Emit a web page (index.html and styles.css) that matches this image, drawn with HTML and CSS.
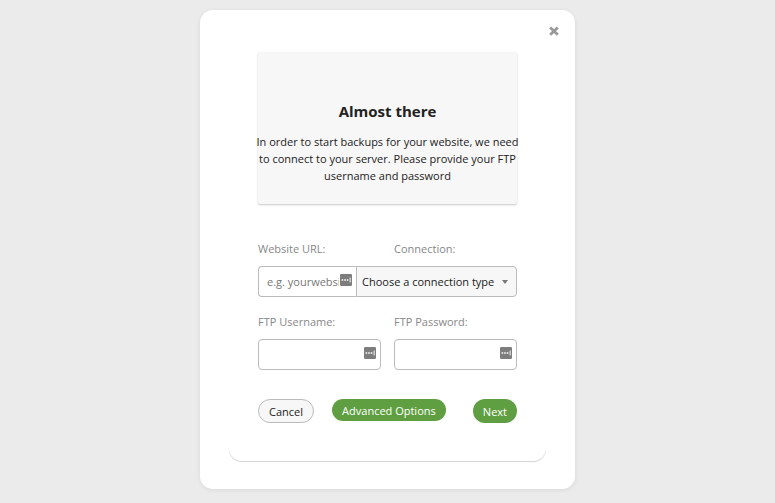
FILE: index.html
```html
<!DOCTYPE html>
<html lang="en">
<head>
    <meta charset="UTF-8">
    <meta name="viewport" content="width=device-width, initial-scale=1.0">
    <title>Almost there</title>
    <link rel="stylesheet" href="styles.css">
</head>
<body>
    <svg class="sprite" aria-hidden="true">
        <symbol id="key" viewBox="0 0 12 12">
            <rect width="12" height="12" rx="1.2" fill="#7d7d7d"/>
            <path d="M1.6 5.2h1.6v1.6H1.6zM4.2 5.2h1.6v1.6H4.2zM6.8 5.2h1.6v1.6H6.8zM9.7 3.6h.9v4.8h-.9z" fill="#fff"/>
        </symbol>
    </svg>
    <div class="modal">
        <button class="close" type="button" aria-label="Close">
            <svg viewBox="0 0 10 10" width="10" height="10">
                <path d="M2.2 2.4l5.6 5.4M7.8 2.4L2.2 7.8" stroke="#999" stroke-width="2.8" stroke-linecap="square"/>
            </svg>
        </button>
        <form class="panel">
            <div class="intro">
                <h1>Almost there</h1>
                <p>In order to start backups for your website, we need to connect to your server. Please provide your FTP username and password</p>
            </div>
            <div class="fields">
                <label for="url">Website URL:</label>
                <label for="connection">Connection:</label>
                <div class="group">
                    <div class="field">
                        <input id="url" type="text" placeholder="e.g. yourwebsite.com">
                        <svg class="key"><use href="#key"/></svg>
                    </div>
                    <div class="select">
                        <select id="connection">
                            <option>Choose a connection type</option>
                            <option>FTP</option>
                            <option>SFTP</option>
                        </select>
                    </div>
                </div>
                <label for="username">FTP Username:</label>
                <label for="password">FTP Password:</label>
                <div class="field">
                    <input id="username" type="text">
                    <svg class="key"><use href="#key"/></svg>
                </div>
                <div class="field">
                    <input id="password" type="password">
                    <svg class="key"><use href="#key"/></svg>
                </div>
            </div>
            <div class="actions">
                <button class="btn cancel" type="button">Cancel</button>
                <button class="btn advanced" type="button">Advanced Options</button>
                <button class="btn next" type="submit">Next</button>
            </div>
        </form>
    </div>
</body>
</html>
```
FILE: styles.css
```css
* {
    box-sizing: border-box;
}
body {
    margin: 0;
    padding: 10px;
    background-color: #ebebeb;
    font-family: "Open Sans", sans-serif;
    font-size: 11px;
    color: #222;
}
input, select, button {
    font: inherit;
    color: inherit;
}
.sprite {
    position: absolute;
    width: 0;
    height: 0;
}
.modal {
    position: relative;
    max-width: 375px;
    margin: 0 auto;
    padding: 28px 29px;
    background-color: #fff;
    border-radius: 13px;
    box-shadow: 0 1px 5px rgba(0, 0, 0, 0.08);
}
.close {
    position: absolute;
    top: 16px;
    right: 16px;
    width: 10px;
    height: 10px;
    padding: 0;
    border: none;
    background: none;
    cursor: pointer;
}
.close svg {
    display: block;
}
.panel {
    padding: 14px 29px 38px;
    border-radius: 13px;
    box-shadow: 0 1px 1px rgba(0, 0, 0, 0.18);
    clip-path: inset(10px 0 -3px);
}
.intro {
    padding: 48px 0 20px;
    background-color: #f7f7f7;
    border-radius: 2px;
    box-shadow: 0 1px 2px rgba(0, 0, 0, 0.22);
    text-align: center;
}
.intro h1 {
    margin: 0 0 11px;
    font-size: 15px;
    line-height: 22px;
}
.intro p {
    margin: 0 -4px;
    line-height: 17px;
}
.fields {
    display: grid;
    grid-template-columns: 1fr 1fr;
    column-gap: 13px;
    margin-top: 36px;
}
.fields label {
    height: 26px;
    line-height: 17px;
    color: #888;
}
.group {
    display: flex;
    grid-column: span 2;
    margin-bottom: 16px;
}
.group .field {
    flex: 1;
    min-width: 0;
}
.field {
    position: relative;
}
.field input {
    display: block;
    width: 100%;
    height: 31px;
    padding: 0 8px;
    border: 1px solid #bbb;
    border-radius: 4px;
    background-color: #fff;
}
.group .field input {
    padding-right: 17px;
    border-right: none;
    border-radius: 4px 0 0 4px;
}
.field input::placeholder {
    color: #777;
}
.key {
    position: absolute;
    top: 8px;
    right: 5px;
    width: 12px;
    height: 12px;
}
.group .key {
    right: 4px;
}
.select {
    position: relative;
    width: 161px;
}
.select select {
    display: block;
    width: 100%;
    height: 31px;
    padding: 0 5px;
    border: 1px solid #bbb;
    border-radius: 0 4px 4px 0;
    background-color: #f7f7f7;
    appearance: none;
}
.select::after {
    content: "";
    position: absolute;
    top: 14px;
    right: 9px;
    border: 3px solid transparent;
    border-top: 4px solid #777;
    border-bottom: none;
    pointer-events: none;
}
.actions {
    display: flex;
    align-items: flex-start;
    justify-content: space-between;
    margin-top: 29px;
}
.btn {
    height: 24px;
    padding: 0 10px;
    border: none;
    border-radius: 12px;
    background-color: #5f9f42;
    color: #fff;
    cursor: pointer;
}
.cancel {
    border: 1px solid #bbb;
    background-color: #f7f7f7;
    color: #222;
}
.advanced {
    height: 22px;
    margin-right: 9px;
}
```
